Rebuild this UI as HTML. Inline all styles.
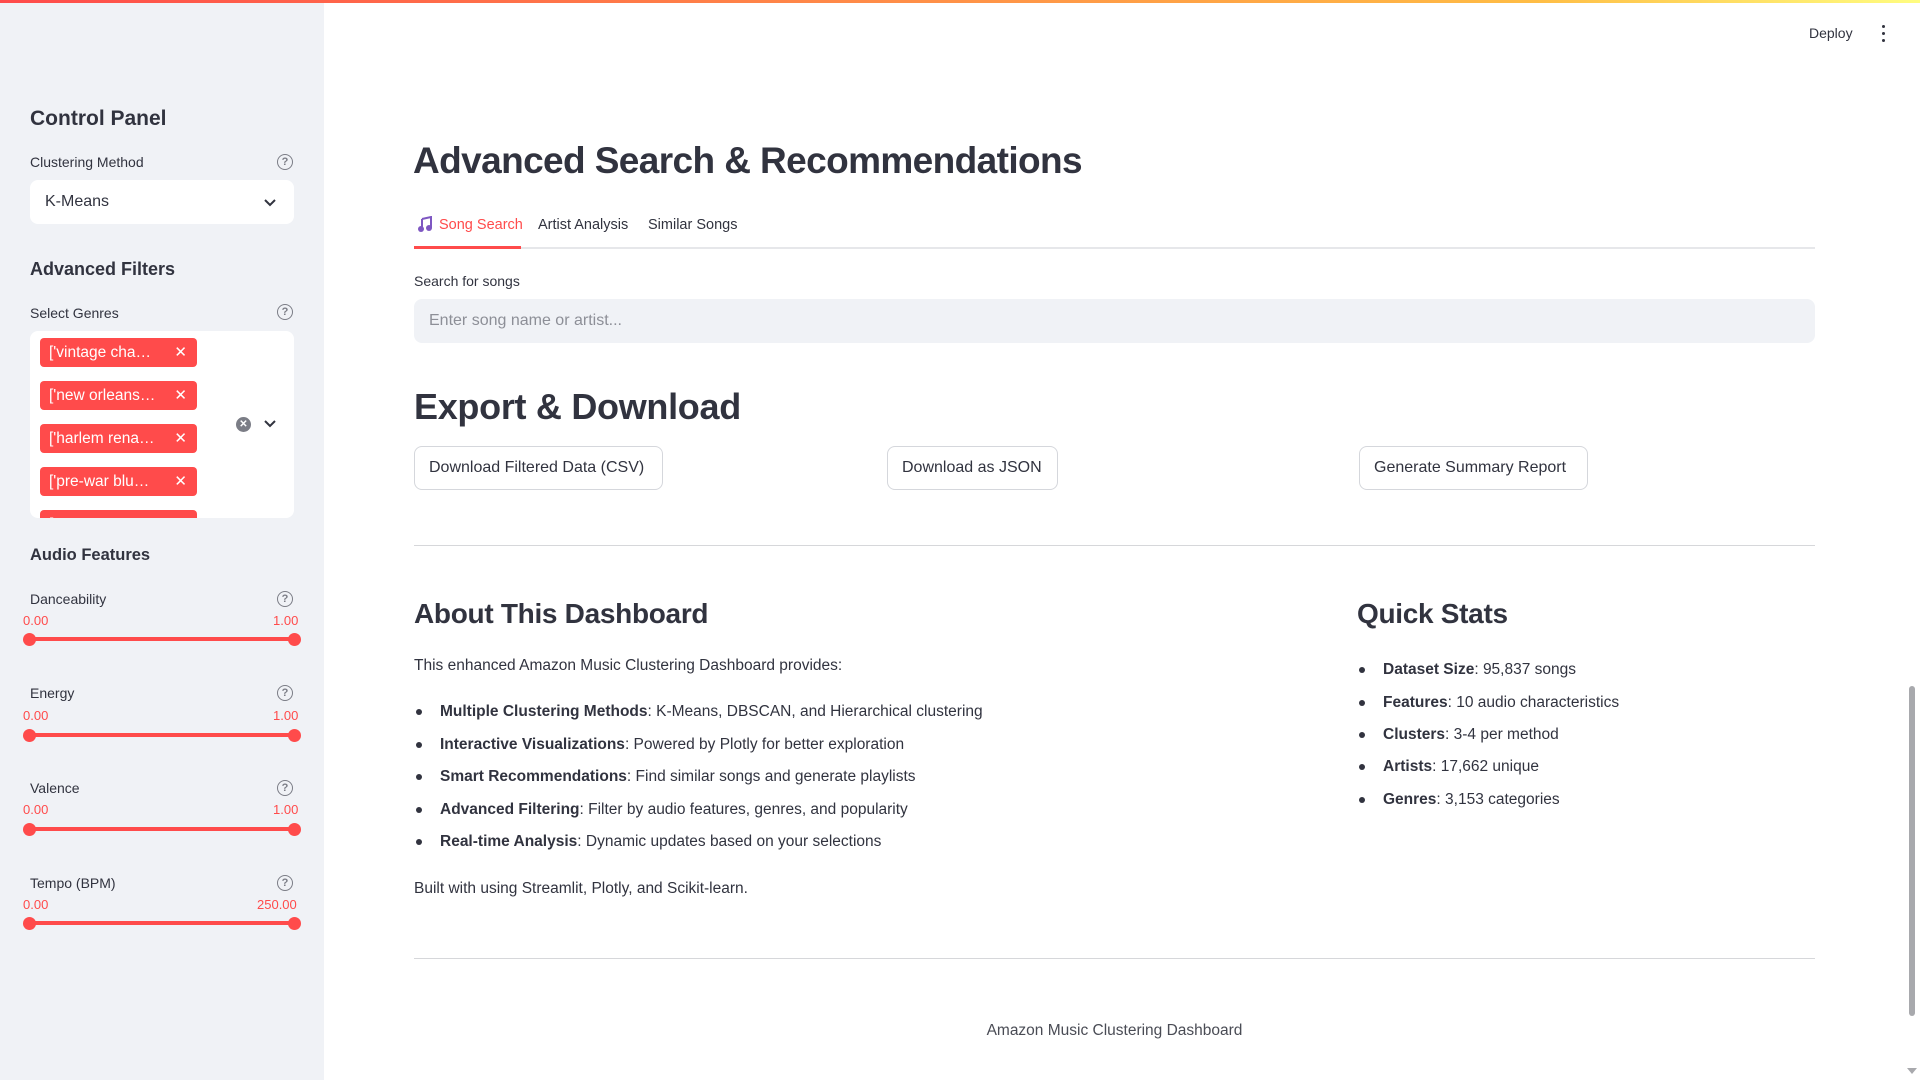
<!DOCTYPE html>
<html><head><meta charset="utf-8"><style>
*{box-sizing:border-box;margin:0;padding:0}
body{width:1920px;height:1080px;overflow:hidden;background:#fff;font-family:"Liberation Sans",sans-serif;color:#31333F;position:relative}
.a{position:absolute;white-space:nowrap}
.top{position:absolute;left:0;top:0;width:1920px;height:3px;background:linear-gradient(90deg,#ff4b4b,#ffbd45 80%,#fffd80)}
.side{position:absolute;left:0;top:0;width:324px;height:1080px;background:#f0f2f6}
.lbl{font-size:14px;color:#31333F}
.q{position:absolute;width:16px;height:16px;border:1.3px solid #7b7d86;border-radius:50%;font-size:11px;color:#7b7d86;text-align:center;line-height:14px;font-weight:bold}
.tag{position:absolute;width:157px;height:29px;background:#ff4b4b;border-radius:4px;color:#fff;font-size:15.5px;line-height:29px;padding-left:9px}
.tag span{position:absolute;right:10px;top:0;font-size:15px}
.val{position:absolute;font-size:13px;color:#ff4b4b}
.track{position:absolute;left:29px;width:265px;height:4px;background:#ff4b4b;border-radius:2px}
.dot{position:absolute;width:13px;height:13px;border-radius:50%;background:#ff4b4b}
.btn{position:absolute;top:446px;height:44px;border:1px solid #d5d7dc;border-radius:8px;font-size:16px;line-height:42px;padding:0 14px;background:#fff}
.li{position:absolute;font-size:15.5px}
.li:before{content:"";position:absolute;left:-24px;top:6px;width:6px;height:6px;border-radius:50%;background:#31333F}
b{font-weight:bold}
</style></head><body>
<div class="side"></div>
<div class="top"></div>

<div class="a" style="left:30px;top:107px;font-size:21px;font-weight:bold">Control Panel</div>
<div class="a lbl" style="left:30px;top:154px">Clustering Method</div>
<div class="q" style="left:277px;top:154px">?</div>
<div class="a" style="left:30px;top:180px;width:264px;height:44px;background:#fff;border-radius:8px"></div>
<div class="a" style="left:45px;top:193px;font-size:16px">K-Means</div>
<svg class="a" style="left:263px;top:198px" width="14" height="9" viewBox="0 0 14 9"><path d="M2 2l5 5 5-5" fill="none" stroke="#31333F" stroke-width="2"/></svg>

<div class="a" style="left:30px;top:259px;font-size:18px;font-weight:bold">Advanced Filters</div>
<div class="a lbl" style="left:30px;top:305px">Select Genres</div>
<div class="q" style="left:277px;top:304px">?</div>
<div class="a" style="left:30px;top:331px;width:264px;height:187px;background:#fff;border-radius:8px"></div>
<div class="a" style="left:30px;top:331px;width:264px;height:187px;overflow:hidden">
<div class="tag" style="left:10px;top:7px">['vintage cha…<span>✕</span></div>
<div class="tag" style="left:10px;top:50px">['new orleans…<span>✕</span></div>
<div class="tag" style="left:10px;top:93px">['harlem rena…<span>✕</span></div>
<div class="tag" style="left:10px;top:136px">['pre-war blu…<span>✕</span></div>
<div class="tag" style="left:10px;top:179px">['</div>
</div>
<div class="a" style="left:236px;top:417px;width:15px;height:15px;border-radius:50%;background:#7b7d86;color:#fff;font-size:10px;text-align:center;line-height:15px;font-weight:bold">✕</div>
<svg class="a" style="left:263px;top:419px" width="14" height="9" viewBox="0 0 14 9"><path d="M2 2l5 5 5-5" fill="none" stroke="#31333F" stroke-width="2"/></svg>

<div class="a" style="left:30px;top:546px;font-size:16.5px;font-weight:bold">Audio Features</div>

<div class="a lbl" style="left:30px;top:591px">Danceability</div><div class="q" style="left:277px;top:591px">?</div>
<div class="val" style="left:23px;top:613px">0.00</div><div class="val" style="left:273px;top:613px">1.00</div>
<div class="track" style="top:637px"></div><div class="dot" style="left:23px;top:633px"></div><div class="dot" style="left:288px;top:633px"></div>

<div class="a lbl" style="left:30px;top:685px">Energy</div><div class="q" style="left:277px;top:685px">?</div>
<div class="val" style="left:23px;top:708px">0.00</div><div class="val" style="left:273px;top:708px">1.00</div>
<div class="track" style="top:733px"></div><div class="dot" style="left:23px;top:729px"></div><div class="dot" style="left:288px;top:729px"></div>

<div class="a lbl" style="left:30px;top:780px">Valence</div><div class="q" style="left:277px;top:780px">?</div>
<div class="val" style="left:23px;top:802px">0.00</div><div class="val" style="left:273px;top:802px">1.00</div>
<div class="track" style="top:827px"></div><div class="dot" style="left:23px;top:823px"></div><div class="dot" style="left:288px;top:823px"></div>

<div class="a lbl" style="left:30px;top:875px">Tempo (BPM)</div><div class="q" style="left:277px;top:875px">?</div>
<div class="val" style="left:23px;top:897px">0.00</div><div class="val" style="left:257px;top:897px">250.00</div>
<div class="track" style="top:921px"></div><div class="dot" style="left:23px;top:917px"></div><div class="dot" style="left:288px;top:917px"></div>

<!-- header -->
<div class="a" style="left:1809px;top:25px;font-size:14px">Deploy</div>
<div class="a" style="left:1882px;top:25px;width:3px;height:3px;border-radius:50%;background:#31333F"></div>
<div class="a" style="left:1882px;top:32px;width:3px;height:3px;border-radius:50%;background:#31333F"></div>
<div class="a" style="left:1882px;top:39px;width:3px;height:3px;border-radius:50%;background:#31333F"></div>

<!-- main -->
<div class="a" style="left:413px;top:140px;font-size:37px;font-weight:bold;letter-spacing:-0.6px">Advanced Search &amp; Recommendations</div>
<svg class="a" style="left:417px;top:216px" width="16" height="17" viewBox="0 0 16 17"><path d="M5 3l9-2v11" fill="none" stroke="#7e57c2" stroke-width="2"/><circle cx="4" cy="13" r="3" fill="#7e57c2"/><circle cx="12" cy="12" r="3" fill="#7e57c2"/><path d="M5 3v10" stroke="#7e57c2" stroke-width="2"/></svg>
<div class="a" style="left:439px;top:217px;font-size:14.5px;color:#ff4b4b">Song Search</div>
<div class="a" style="left:538px;top:217px;font-size:14.5px">Artist Analysis</div>
<div class="a" style="left:648px;top:217px;font-size:14.5px">Similar Songs</div>
<div class="a" style="left:414px;top:247px;width:1401px;height:2px;background:#e6e7ea"></div>
<div class="a" style="left:414px;top:246px;width:107px;height:3px;background:#ff4b4b"></div>

<div class="a" style="left:414px;top:273px;font-size:14px">Search for songs</div>
<div class="a" style="left:414px;top:299px;width:1401px;height:44px;background:#f0f2f6;border-radius:8px"></div>
<div class="a" style="left:429px;top:312px;font-size:16px;color:#8d8f97">Enter song name or artist...</div>

<div class="a" style="left:414px;top:386px;font-size:36px;font-weight:bold;letter-spacing:-0.3px">Export &amp; Download</div>
<div class="btn" style="left:414px;width:249px">Download Filtered Data (CSV)</div>
<div class="btn" style="left:887px;width:171px">Download as JSON</div>
<div class="btn" style="left:1359px;width:229px">Generate Summary Report</div>
<div class="a" style="left:414px;top:545px;width:1401px;height:1px;background:#d6d7da"></div>

<div class="a" style="left:414px;top:598px;font-size:28px;font-weight:bold;letter-spacing:-0.3px">About This Dashboard</div>
<div class="a" style="left:414px;top:657px;font-size:15.5px">This enhanced Amazon Music Clustering Dashboard provides:</div>
<div class="a li" style="left:440px;top:703px"><b>Multiple Clustering Methods</b>: K-Means, DBSCAN, and Hierarchical clustering</div>
<div class="a li" style="left:440px;top:736px"><b>Interactive Visualizations</b>: Powered by Plotly for better exploration</div>
<div class="a li" style="left:440px;top:768px"><b>Smart Recommendations</b>: Find similar songs and generate playlists</div>
<div class="a li" style="left:440px;top:801px"><b>Advanced Filtering</b>: Filter by audio features, genres, and popularity</div>
<div class="a li" style="left:440px;top:833px"><b>Real-time Analysis</b>: Dynamic updates based on your selections</div>
<div class="a" style="left:414px;top:880px;font-size:15.5px">Built with using Streamlit, Plotly, and Scikit-learn.</div>

<div class="a" style="left:1357px;top:598px;font-size:28px;font-weight:bold;letter-spacing:-0.3px">Quick Stats</div>
<div class="a li" style="left:1383px;top:661px"><b>Dataset Size</b>: 95,837 songs</div>
<div class="a li" style="left:1383px;top:694px"><b>Features</b>: 10 audio characteristics</div>
<div class="a li" style="left:1383px;top:726px"><b>Clusters</b>: 3-4 per method</div>
<div class="a li" style="left:1383px;top:758px"><b>Artists</b>: 17,662 unique</div>
<div class="a li" style="left:1383px;top:791px"><b>Genres</b>: 3,153 categories</div>

<div class="a" style="left:414px;top:958px;width:1401px;height:1px;background:#d6d7da"></div>
<div class="a" style="left:414px;top:1022px;width:1401px;text-align:center;font-size:15.5px;color:#4a4c55">Amazon Music Clustering Dashboard</div>

<div class="a" style="left:1909px;top:686px;width:6px;height:330px;border-radius:3px;background:#a8a9ad"></div>
<div class="a" style="left:1907px;top:1068px;width:0;height:0;border-left:5px solid transparent;border-right:5px solid transparent;border-top:6px solid #a8a9ad"></div>
</body></html>
